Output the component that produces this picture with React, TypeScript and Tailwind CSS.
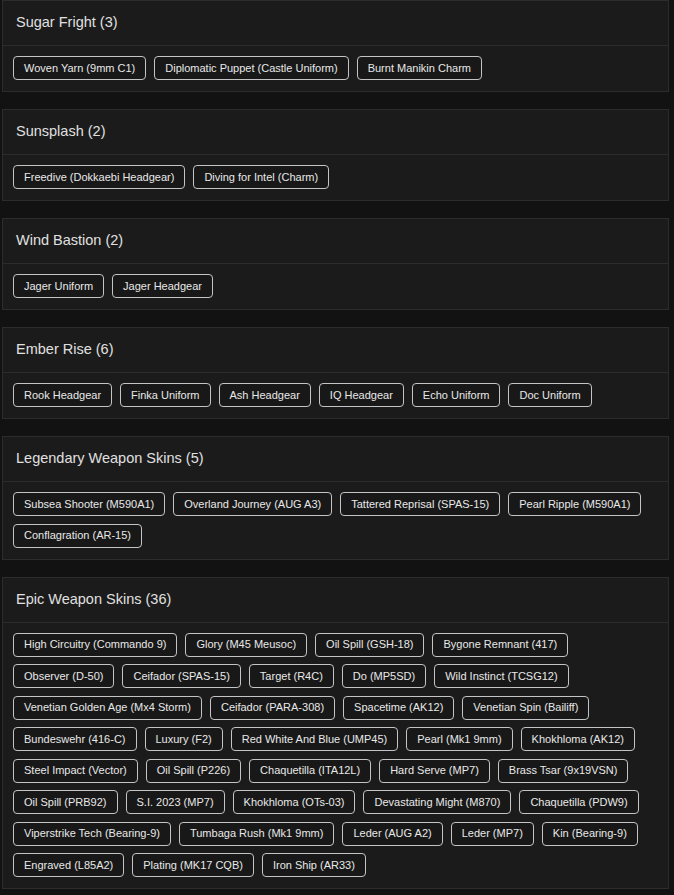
import React from "react";

const sections: { title: string; items: string[] }[] = [
  { title: "Sugar Fright (3)", items: ["Woven Yarn (9mm C1)", "Diplomatic Puppet (Castle Uniform)", "Burnt Manikin Charm"] },
  { title: "Sunsplash (2)", items: ["Freedive (Dokkaebi Headgear)", "Diving for Intel (Charm)"] },
  { title: "Wind Bastion (2)", items: ["Jager Uniform", "Jager Headgear"] },
  { title: "Ember Rise (6)", items: ["Rook Headgear", "Finka Uniform", "Ash Headgear", "IQ Headgear", "Echo Uniform", "Doc Uniform"] },
  {
    title: "Legendary Weapon Skins (5)",
    items: ["Subsea Shooter (M590A1)", "Overland Journey (AUG A3)", "Tattered Reprisal (SPAS-15)", "Pearl Ripple (M590A1)", "Conflagration (AR-15)"],
  },
  {
    title: "Epic Weapon Skins (36)",
    items: [
      "High Circuitry (Commando 9)",
      "Glory (M45 Meusoc)",
      "Oil Spill (GSH-18)",
      "Bygone Remnant (417)",
      "Observer (D-50)",
      "Ceifador (SPAS-15)",
      "Target (R4C)",
      "Do (MP5SD)",
      "Wild Instinct (TCSG12)",
      "Venetian Golden Age (Mx4 Storm)",
      "Ceifador (PARA-308)",
      "Spacetime (AK12)",
      "Venetian Spin (Bailiff)",
      "Bundeswehr (416-C)",
      "Luxury (F2)",
      "Red White And Blue (UMP45)",
      "Pearl (Mk1 9mm)",
      "Khokhloma (AK12)",
      "Steel Impact (Vector)",
      "Oil Spill (P226)",
      "Chaquetilla (ITA12L)",
      "Hard Serve (MP7)",
      "Brass Tsar (9x19VSN)",
      "Oil Spill (PRB92)",
      "S.I. 2023 (MP7)",
      "Khokhloma (OTs-03)",
      "Devastating Might (M870)",
      "Chaquetilla (PDW9)",
      "Viperstrike Tech (Bearing-9)",
      "Tumbaga Rush (Mk1 9mm)",
      "Leder (AUG A2)",
      "Leder (MP7)",
      "Kin (Bearing-9)",
      "Engraved (L85A2)",
      "Plating (MK17 CQB)",
      "Iron Ship (AR33)",
    ],
  },
];

export default function App() {
  return (
    <div
      className="min-h-[895px] w-[674px] bg-[#121212] text-[#e2e2e2]"
      style={{ fontFamily: '"Liberation Sans", Arial, sans-serif' }}
    >
      <div className="ml-[2px] flex w-[667px] flex-col gap-[17px]">
        {sections.map((s) => (
          <div key={s.title} className="border border-[#2c2c2c] bg-[#1b1b1b]">
            <div className="flex h-[45px] items-center border-b border-[#2c2c2c] px-[13px] text-[14.5px] text-[#e0e0e0]">
              {s.title}
            </div>
            <div className="flex flex-wrap gap-x-[8px] gap-y-[7.5px] px-[10px] pb-[11px] pt-[10px]">
              {s.items.map((it) => (
                <span
                  key={it}
                  className="flex h-[24px] items-center rounded-[4px] border border-[#c4c4c4] bg-[#181818] px-[10px] text-[11px] leading-none text-[#e8e8e8]"
                >
                  {it}
                </span>
              ))}
            </div>
          </div>
        ))}
      </div>
    </div>
  );
}
